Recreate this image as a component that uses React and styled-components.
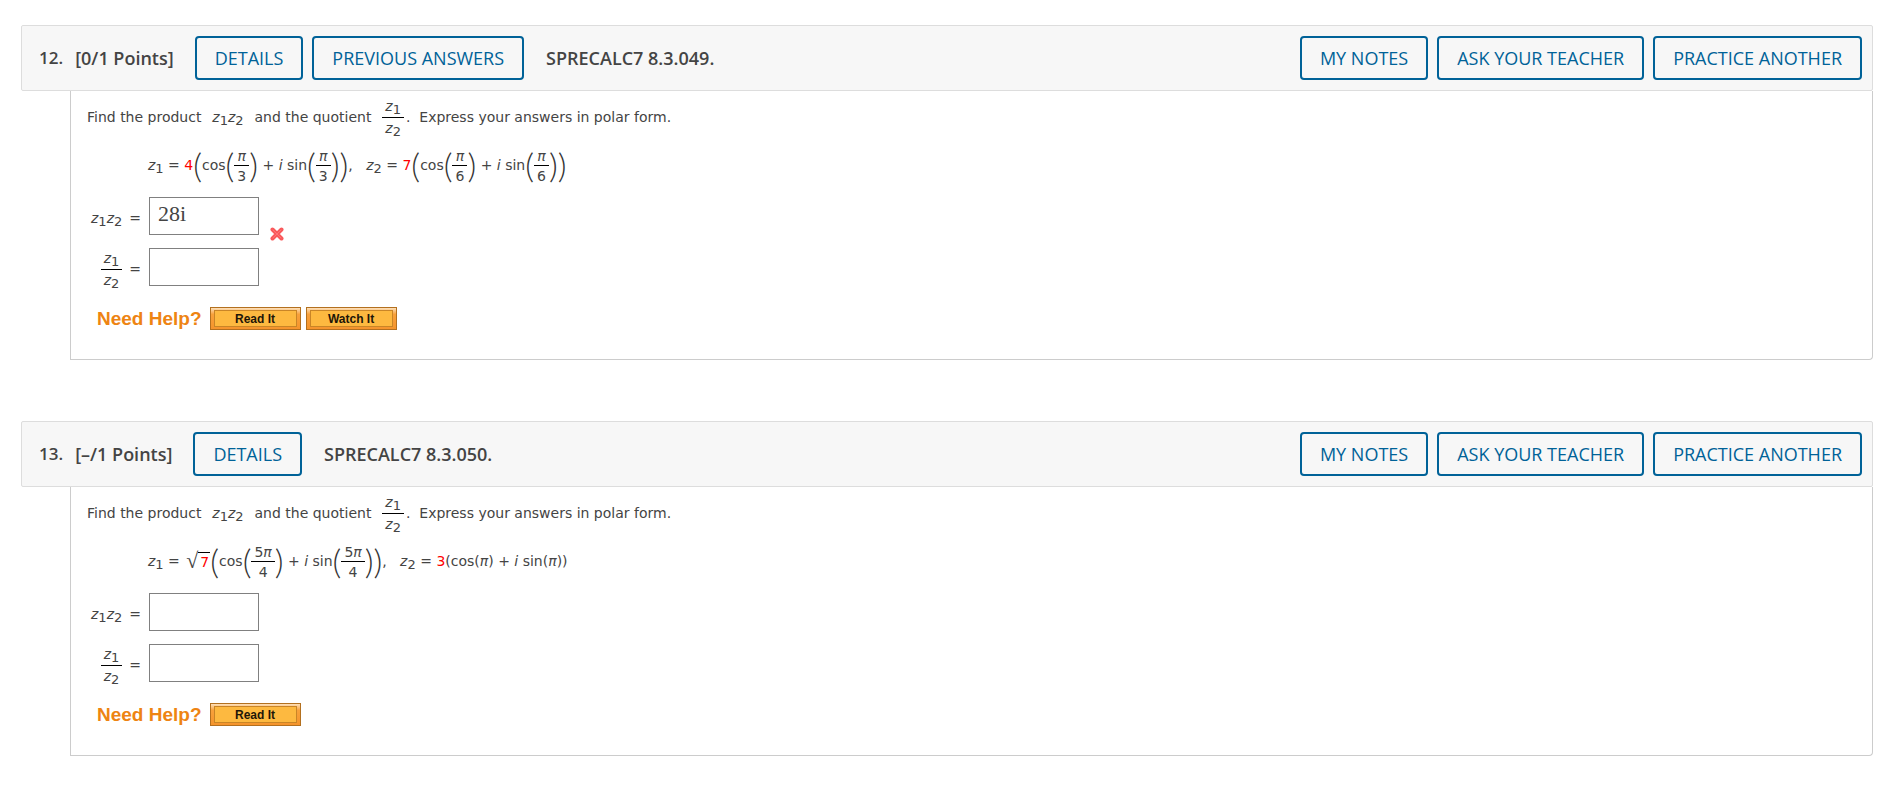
import React from "react";
import styled, { createGlobalStyle } from "styled-components";

const GlobalStyle = createGlobalStyle`
  body {
    margin: 0;
    background: #fff;
    color: #444;
    font-family: "DejaVu Sans", sans-serif;
    font-size: 14px;
    line-height: 18px;
  }
  * {
    box-sizing: border-box;
  }
`;

const Page = styled.main`
  display: flex;
  flex-direction: column;
  gap: 61px;
  padding: 25px 15px 41px 21px;
`;

const Header = styled.header`
  display: flex;
  align-items: center;
  justify-content: space-between;
  padding: 10px;
  padding-left: 17px;
  background: #f7f7f7;
  border: 1px solid #ddd;
  border-radius: 2px;
  font-family: "Open Sans", sans-serif;
  font-size: 18px;
  line-height: 24px;
`;
const HeaderGroup = styled.div`
  display: flex;
  align-items: center;
  gap: 9px;
`;
const Title = styled.h2`
  display: flex;
  gap: 12px;
  margin: 0 12px 0 0;
  font-size: 18px;
  font-weight: 600;
`;
const Number = styled.span`
  font-size: 17px;
`;
const Source = styled.strong`
  margin-left: 13px;
  font-weight: 600;
`;
const HeaderButton = styled.button`
  height: 44px;
  padding: 0 18px;
  border: 2px solid #006298;
  border-radius: 4px;
  background: #f7f7f7;
  color: #006298;
  font-family: inherit;
  font-size: 18px;
  font-weight: 500;
  cursor: pointer;
`;

const Panel = styled.div`
  margin-left: 49px;
  padding: 8px 16px 29px;
  border: 1px solid #ccc;
  border-top: 0;
  border-radius: 0 0 4px 0;
`;
const Prompt = styled.div`
  display: flex;
  align-items: center;
  gap: 2px;
  height: 36px;
  white-space: pre;
`;
const Equation = styled(Prompt)`
  gap: 0;
  margin: 12px 0 14px 61px;
`;

const Sub = styled.sub`
  font-size: 13px;
  font-style: normal;
  line-height: 1px;
  vertical-align: -3px;
`;
const Italic = styled.i`
  font-style: italic;
`;
const Pi = styled.i`
  font-size: 14px;
  line-height: 1px;
`;
const FractionBox = styled.span`
  display: inline-flex;
  flex-direction: column;
  align-items: stretch;
  text-align: center;
`;
const Numerator = styled.span`
  padding: ${({ $low }) => ($low ? "2px 3px 0" : "0 3px 2px")};
  border-bottom: 1px solid #000;
`;
const Denominator = styled.span`
  padding: 1px 3px 0;
`;
const Paren = styled.span`
  color: #333;
  font-family: Lato, sans-serif;
  font-size: 34px;
  font-weight: 300;
  line-height: 36px;
`;
const Given = styled.span`
  color: #f00;
`;
const Radical = styled.span`
  margin-left: 2px;
  font-family: "Liberation Serif", serif;
  font-size: 22px;
`;
const Radicand = styled.span`
  padding: 0 1px 0 2px;
  border-top: 1px solid #000;
`;

const Answers = styled.div`
  display: grid;
  gap: 13px;
`;
const AnswerRow = styled.div`
  display: grid;
  grid-template-columns: 54px 110px auto;
  grid-template-rows: 38px;
  align-items: center;
  column-gap: 8px;
  justify-content: start;
`;
const AnswerLabel = styled.label`
  display: flex;
  align-items: center;
  justify-content: flex-end;
  gap: 7px;
  padding-top: 3px;
`;
const AnswerInput = styled.input`
  width: 110px;
  height: 38px;
  padding: 0 8px 4px;
  border: 1px solid #808080;
  border-radius: 0;
  background: #fff;
  color: #444;
  font-family: "Liberation Serif", serif;
  font-size: 22px;
`;
const WrongIcon = styled.svg`
  align-self: end;
  margin: 0 0 -6px 3px;
`;

const Help = styled.div`
  display: flex;
  align-items: center;
  gap: 5px;
  margin: 21px 0 0 10px;
  font-family: "Liberation Sans", sans-serif;
`;
const HelpTitle = styled.span`
  margin-right: 3px;
  color: #ee8412;
  font-size: 19px;
  font-weight: 700;
  line-height: 20px;
`;
const HelpButton = styled.button`
  width: 91px;
  height: 23px;
  padding: 2px 3px;
  border: 1px solid #b3701f;
  background: linear-gradient(#fde0ba, #f8a13b 30%, #f5942c);
  color: #1e1608;
  font-family: inherit;
  font-size: 12px;
  font-weight: 700;
  cursor: pointer;
`;
const HelpFace = styled.span`
  display: block;
  padding-top: 1px;
  border: 1px solid #c98527;
  background: #fdb940;
  line-height: 14px;
`;

const Z = ({ n }) => (
  <span>
    <Italic>z</Italic>
    <Sub>{n}</Sub>
  </span>
);

const Product = () => (
  <span>
    <Z n={1} />
    <Z n={2} />
  </span>
);

const Fraction = ({ top, bottom, low }) => (
  <FractionBox>
    <Numerator $low={low}>{top}</Numerator>
    <Denominator>{bottom}</Denominator>
  </FractionBox>
);

const Quotient = () => <Fraction top={<Z n={1} />} bottom={<Z n={2} />} />;

const Polar = ({ angle }) => (
  <>
    <Paren>(</Paren>cos<Paren>(</Paren>
    {angle}
    <Paren>)</Paren>
    <span> + </span>
    <Italic>i</Italic>
    <span> sin</span>
    <Paren>(</Paren>
    {angle}
    <Paren>)</Paren>
    <Paren>)</Paren>
  </>
);

const Wrong = () => (
  <WrongIcon width="14" height="14" viewBox="0 0 14 14" role="img" aria-label="Incorrect">
    <path d="M2.5 2.5 L11.5 11.5 M11.5 2.5 L2.5 11.5" stroke="#f9595b" strokeWidth="4" strokeLinecap="round" />
    <path d="M3 3 L11 11 M11 3 L3 11" stroke="#ff7476" strokeWidth="1" strokeLinecap="round" />
  </WrongIcon>
);

const Question = ({ number, points, source, previous, equation, answer, wrong, help }) => (
  <section>
    <Header>
      <HeaderGroup>
        <Title>
          <Number>{number}.</Number>
          <span>[{points} Points]</span>
        </Title>
        <HeaderButton>DETAILS</HeaderButton>
        {previous && <HeaderButton>PREVIOUS ANSWERS</HeaderButton>}
        <Source>{source}</Source>
      </HeaderGroup>
      <HeaderGroup>
        <HeaderButton>MY NOTES</HeaderButton>
        <HeaderButton>ASK YOUR TEACHER</HeaderButton>
        <HeaderButton>PRACTICE ANOTHER</HeaderButton>
      </HeaderGroup>
    </Header>
    <Panel>
      <Prompt>
        <span>Find the product  </span>
        <Product />
        <span>  and the quotient  </span>
        <Quotient />
        <span>.  Express your answers in polar form.</span>
      </Prompt>
      <Equation>{equation}</Equation>
      <Answers>
        <AnswerRow>
          <AnswerLabel htmlFor={`product-${number}`}>
            <Product />
            <span>=</span>
          </AnswerLabel>
          <AnswerInput id={`product-${number}`} defaultValue={answer} />
          {wrong && <Wrong />}
        </AnswerRow>
        <AnswerRow>
          <AnswerLabel htmlFor={`quotient-${number}`}>
            <Quotient />
            <span>=</span>
          </AnswerLabel>
          <AnswerInput id={`quotient-${number}`} />
        </AnswerRow>
      </Answers>
      <Help>
        <HelpTitle>Need Help?</HelpTitle>
        {help.map((item) => (
          <HelpButton key={item}>
            <HelpFace>{item}</HelpFace>
          </HelpButton>
        ))}
      </Help>
    </Panel>
  </section>
);

const App = () => (
  <>
    <GlobalStyle />
    <Page>
      <Question
        number={12}
        points="0/1"
        source="SPRECALC7 8.3.049."
        previous
        answer="28i"
        wrong
        help={["Read It", "Watch It"]}
        equation={
          <>
            <Z n={1} />
            <span> = </span>
            <Given>4</Given>
            <Polar angle={<Fraction low top={<Pi>π</Pi>} bottom="3" />} />
            <span>,   </span>
            <Z n={2} />
            <span> = </span>
            <Given>7</Given>
            <Polar angle={<Fraction low top={<Pi>π</Pi>} bottom="6" />} />
          </>
        }
      />
      <Question
        number={13}
        points="–/1"
        source="SPRECALC7 8.3.050."
        help={["Read It"]}
        equation={
          <>
            <Z n={1} />
            <span> = </span>
            <Radical>√</Radical>
            <Radicand>
              <Given>7</Given>
            </Radicand>
            <Polar angle={<Fraction low top={<>5<Pi>π</Pi></>} bottom="4" />} />
            <span>,   </span>
            <Z n={2} />
            <span> = </span>
            <Given>3</Given>
            <span>
              (cos(<Pi>π</Pi>) + <Italic>i</Italic> sin(<Pi>π</Pi>))
            </span>
          </>
        }
      />
    </Page>
  </>
);

export default App;
